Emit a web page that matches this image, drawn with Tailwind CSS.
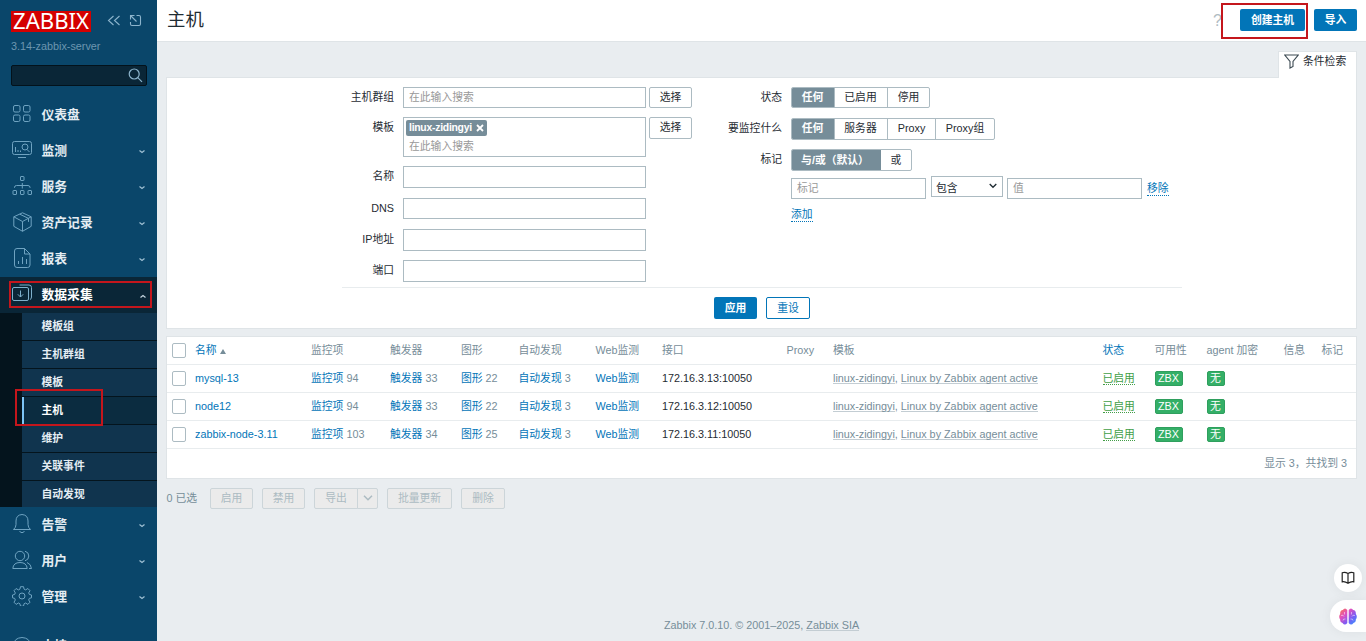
<!DOCTYPE html>
<html lang="zh-CN">

<head>
    <meta charset="UTF-8">
    <meta name="viewport" content="width=device-width, initial-scale=1.0">
    <title>主机</title>
    <script src="https://cdn.jsdelivr.net/npm/@tailwindcss/browser@4"></script>
</head>

<body class="relative flex h-[641px] overflow-hidden bg-[#e9edf0] font-['Liberation_Sans','Noto_Sans_CJK_SC',sans-serif] text-[10.8px] leading-[14px] text-[#1f2c33]">
    <!-- Sidebar -->
    <aside class="flex h-[641px] w-[157px] shrink-0 flex-col overflow-hidden bg-[#0a466a]">
        <div class="flex h-[43px] shrink-0 items-start pt-[11px] pl-[11px]">
            <svg width="80" height="21" viewBox="0 0 80 21" class="bg-[#d40000]">
                <text x="2" y="18" font-family="Noto Sans" font-size="21" fill="#fff" textLength="76" lengthAdjust="spacingAndGlyphs">ZABBIX</text>
            </svg>
            <svg class="mt-1 ml-4" width="14" height="12" viewBox="0 0 14 12" fill="none" stroke="#8cb4cc" stroke-width="1.1">
                <path d="M6.5 1 1.5 5.5l5 4.5M12.5 1l-5 4.5 5 4.5" />
            </svg>
            <svg class="mt-[3px] ml-2" width="13" height="13" viewBox="0 0 13 13" fill="none" stroke="#8cb4cc" stroke-width="1.1">
                <path d="M7.500 1.500h2.500q1.500 0 1.500 1.500v7q0 1.500-1.500 1.500H3q-1.500 0-1.500-1.500V8M1.500 5.500v-4h4M1.500 1.500l6 6" />
            </svg>
        </div>
        <div class="h-[22px] shrink-0 pl-[11px] leading-[7px] text-[#6d96b0]">3.14-zabbix-server</div>
        <div class="ml-[11px] flex h-[21px] w-[136px] shrink-0 items-center justify-end rounded-xs border border-[#03121b] bg-[#0a2637] pr-[3px]">
            <svg width="15" height="15" viewBox="0 0 15 15" fill="none" stroke="#8cb4cc" stroke-width="1.2">
                <circle cx="6.200" cy="6" r="5" />
                <path d="m9.800 9.600 4.200 4.200" />
            </svg>
        </div>

        <nav class="mt-[11px] shrink-0 text-[12.8px] font-bold text-[#e4edf3]">
            <a class="flex h-9 items-center pb-[2px] pl-3">
                <svg width="20" height="20" viewBox="0 0 20 20" fill="none" stroke="#6fa3c1">
                    <rect x="1.500" y="1.500" width="6.500" height="6.500" rx="1.500" />
                    <rect x="11.500" y="1.500" width="6.500" height="6.500" rx="1.500" />
                    <rect x="1.500" y="11" width="6.500" height="6.500" rx="1.500" />
                    <rect x="11.500" y="11" width="6.500" height="6.500" rx="1.500" />
                </svg>
                <span class="mt-px ml-[9.5px]">仪表盘</span>
            </a>
            <a class="flex h-9 items-center pr-[11px] pb-[2px] pl-3">
                <svg width="20" height="20" viewBox="0 0 20 20" fill="none" stroke="#6fa3c1">
                    <rect x=".5" y="1.500" width="19" height="13" rx="2" />
                    <path d="M6 17.500h8M3.500 7v5M6 10v2M8.500 10.500V12M15 9.500l2.500 2.500" />
                    <circle cx="13" cy="7" r="3" />
                </svg>
                <span class="mt-px ml-[9.5px]">监测</span>
                <svg class="mt-[3px] ml-auto" width="8" height="6" viewBox="0 0 8 6" fill="none" stroke="#9fc0d3" stroke-width="1.2"><path d="m1.500 1.500 2.500 2 2.500-2" /></svg>
            </a>
            <a class="flex h-9 items-center pr-[11px] pb-[2px] pl-3">
                <svg width="20" height="20" viewBox="0 0 20 20" fill="none" stroke="#6fa3c1">
                    <rect x="8.500" y=".5" width="3.500" height="4" rx=".5" />
                    <rect x="1" y="14.500" width="3.500" height="4" rx=".5" />
                    <rect x="8.500" y="14.500" width="3.500" height="4" rx=".5" />
                    <rect x="16" y="14.500" width="3.500" height="4" rx=".5" />
                    <path d="M10.300 7v5.500M2.500 12v-.5q0-2 2-2H16q2 0 2 2v.5" />
                </svg>
                <span class="mt-px ml-[9.5px]">服务</span>
                <svg class="mt-[3px] ml-auto" width="8" height="6" viewBox="0 0 8 6" fill="none" stroke="#9fc0d3" stroke-width="1.2"><path d="m1.500 1.500 2.500 2 2.500-2" /></svg>
            </a>
            <a class="flex h-9 items-center pr-[11px] pb-[2px] pl-3">
                <svg width="20" height="20" viewBox="0 0 20 20" fill="none" stroke="#6fa3c1">
                    <path d="m10.500.8 8.700 4v9.500l-8.700 5-8.700-5V4.800zM1.800 4.800l8.700 4.700 8.700-4.700M10.500 9.500v9.800M7.800 2.200l8.700 4.200v3.500" />
                </svg>
                <span class="mt-px ml-[9.5px]">资产记录</span>
                <svg class="mt-[3px] ml-auto" width="8" height="6" viewBox="0 0 8 6" fill="none" stroke="#9fc0d3" stroke-width="1.2"><path d="m1.500 1.500 2.500 2 2.500-2" /></svg>
            </a>
            <a class="flex h-9 items-center pr-[11px] pb-[2px] pl-3">
                <svg width="20" height="20" viewBox="0 0 20 20" fill="none" stroke="#6fa3c1">
                    <path d="M5 .5h7.500l5.500 5.500v11q0 2.500-2.500 2.500H5q-2.500 0-2.500-2.500V3Q2.500.5 5 .5M12.500.5V6H18M6.500 16v-3M10.500 16V9M14.500 16v-5" />
                </svg>
                <span class="mt-px ml-[9.5px]">报表</span>
                <svg class="mt-[3px] ml-auto" width="8" height="6" viewBox="0 0 8 6" fill="none" stroke="#9fc0d3" stroke-width="1.2"><path d="m1.500 1.500 2.500 2 2.500-2" /></svg>
            </a>
            <a class="flex h-9 items-center bg-[#0a2637] pr-[10px] pb-[2px] pl-3 text-white">
                <svg width="21" height="20" viewBox="0 0 21 20" fill="none" stroke="#7fb0cc">
                    <rect x=".5" y="3.500" width="16" height="13" rx="1.500" />
                    <path d="M7.500 1H17q2.500 0 2.500 2.500V13q0 2-1.500 2.500M8.500 6.500V13M5.800 10.300l2.700 2.700 2.700-2.700" />
                </svg>
                <span class="mt-px ml-[8.5px]">数据采集</span>
                <svg class="mt-[3px] ml-auto" width="8" height="6" viewBox="0 0 8 6" fill="none" stroke="#c5d6e0" stroke-width="1.200"><path d="m1.500 4.500 2.500-2 2.500 2" /></svg>
            </a>

            <!-- Submenu -->
            <ul class="h-[194px] overflow-hidden border-l-[22px] border-[#04141d] bg-[#10344e] text-[10.8px] [&>li]:h-7 [&>li]:border-b [&>li]:border-[#04141d] [&>li]:pt-[6px] [&>li]:pl-[19.5px]">
                <li>模板组</li>
                <li>主机群组</li>
                <li>模板</li>
                <li class="bg-[#0b2c40] text-white shadow-[inset_2px_0_0_#7cc4f5]">主机</li>
                <li>维护</li>
                <li>关联事件</li>
                <li>自动发现</li>
            </ul>

            <a class="flex h-9 items-center pr-[11px] pb-[2px] pl-3">
                <svg width="20" height="20" viewBox="0 0 20 20" fill="none" stroke="#6fa3c1">
                    <path d="M1.500 15.500h17q-2.500-2-2.500-5V7q0-6-6-6.500Q4 1 4 7v3.500q0 3-2.500 5zM7.500 17.500q2.500 2.500 5 0" />
                </svg>
                <span class="mt-px ml-[9.5px]">告警</span>
                <svg class="mt-[4px] ml-auto" width="8" height="6" viewBox="0 0 8 6" fill="none" stroke="#9fc0d3" stroke-width="1.200"><path d="m1.500 1.500 2.500 2 2.500-2" /></svg>
            </a>
            <a class="flex h-9 items-center pr-[11px] pb-[2px] pl-3">
                <svg width="20" height="20" viewBox="0 0 20 20" fill="none" stroke="#6fa3c1">
                    <circle cx="8" cy="6" r="4.700" />
                    <path d="M.8 18.500q.5-6 7.200-6t7.200 6zM13 1.200q3.800 1 3.800 4.800T13 10.800M15 12.500q4 1.500 4.500 6H17" />
                </svg>
                <span class="mt-px ml-[9.5px]">用户</span>
                <svg class="mt-[4px] ml-auto" width="8" height="6" viewBox="0 0 8 6" fill="none" stroke="#9fc0d3" stroke-width="1.200"><path d="m1.500 1.500 2.500 2 2.500-2" /></svg>
            </a>
            <a class="flex h-9 items-center pr-[11px] pb-[2px] pl-3">
                <svg width="20" height="20" viewBox="0 0 20 20" fill="none" stroke="#6fa3c1">
                    <circle cx="10" cy="10" r="3" />
                    <path d="M8.500.7h3l.6 2.500 1.500.7 2.300-1.400 2.100 2.200-1.300 2.200.6 1.500 2.200.6v2.800l-2.200.6-.6 1.600 1.300 2.200-2.100 2.200-2.300-1.400-1.500.7-.6 2.500h-3l-.6-2.500-1.500-.7-2.300 1.400L2 16.200 3.300 14l-.6-1.600-2.200-.6V9l2.200-.6.6-1.500L2 4.700l2.100-2.200 2.300 1.400 1.500-.7z" />
                </svg>
                <span class="mt-px ml-[9.5px]">管理</span>
                <svg class="mt-[4px] ml-auto" width="8" height="6" viewBox="0 0 8 6" fill="none" stroke="#9fc0d3" stroke-width="1.200"><path d="m1.500 1.500 2.500 2 2.500-2" /></svg>
            </a>
            <a class="mt-[13px] flex h-9 items-center pl-3">
                <svg width="20" height="20" viewBox="0 0 20 20" fill="none" stroke="#6fa3c1">
                    <path d="M1.500 12V9q.5-7 8.500-7.500Q18 2 18.500 9v3" />
                </svg>
                <span class="ml-[9.5px]">支持</span>
            </a>
        </nav>
    </aside>

    <!-- Content -->
    <div class="flex grow flex-col">
        <header class="flex h-[42px] shrink-0 items-start border-b border-[#dfe4e7] bg-white pt-[9px] pr-[9px] pl-[10px]">
            <h1 class="text-[18.4px] leading-[22px]">主机</h1>
            <span class="mt-[2px] ml-auto text-base leading-5 text-[#b0bcc3]">?</span>
            <button class="ml-[18px] h-[22px] w-[65px] rounded-xs bg-[#0275b8] pb-px font-bold text-white">创建主机</button>
            <button class="ml-[9px] h-[22px] w-[43px] rounded-xs bg-[#0275b8] pb-px font-bold text-white">导入</button>
        </header>

        <main class="flex grow flex-col px-[9px]">
            <div class="z-10 mt-[9px] mb-[-1px] flex h-[27px] w-[79px] shrink-0 items-start self-end border border-b-0 border-[#dfe4e7] bg-white pt-[2px] pl-[5px]">
                <svg width="15" height="15" viewBox="0 0 15 15" fill="none" stroke="#3c4a52" stroke-width="1.100">
                    <path d="M.8 1h13.400L9 7.500v5l-3 1.500V7.500z" />
                </svg>
                <span class="ml-1">条件检索</span>
            </div>

            <!-- Filter -->
            <form class="h-[252px] shrink-0 border border-[#dfe4e7] bg-white pl-[175px]">
                <div class="flex h-[210px] w-[840px] border-b border-[#e8ecee] pt-[9px]">
                    <div class="w-[374px]">
                        <div class="flex h-[30px] items-start">
                            <label class="mt-[3px] mr-[9px] w-[52px] text-right">主机群组</label>
                            <div class="h-[21px] w-[243px] border border-[#acbbc2] pt-[2px] pl-[5px] text-[#999]">在此输入搜索</div>
                            <button type="button" class="ml-[3px] h-[21px] w-[43px] rounded-xs border border-[#acbbc2] pb-px">选择</button>
                        </div>
                        <div class="flex h-[49px] items-start">
                            <label class="mt-[3px] mr-[9px] w-[52px] text-right">模板</label>
                            <div class="h-10 w-[243px] border border-[#acbbc2] pt-[2px] pl-[2px]">
                                <span class="flex h-4 w-[81px] items-center justify-between rounded-xs bg-[#768d99] px-[3px] text-[10.4px] font-bold tracking-[-.25px] text-white">linux-zidingyi
                                    <svg width="8" height="8" viewBox="0 0 8 8" stroke="#fff" stroke-width="1.800"><path d="m1 1 6 6M7 1 1 7" /></svg>
                                </span>
                                <div class="mt-[3px] pl-[3px] text-[#999]">在此输入搜索</div>
                            </div>
                            <button type="button" class="ml-[3px] h-[22px] w-[43px] rounded-xs border border-[#acbbc2] pb-[2px]">选择</button>
                        </div>
                        <div class="flex h-8 items-start">
                            <label class="mt-[3px] mr-[9px] w-[52px] text-right">名称</label>
                            <input type="text" class="h-[22px] w-[243px] border border-[#acbbc2]">
                        </div>
                        <div class="flex h-[31px] items-start">
                            <label class="mt-[3px] mr-[9px] w-[52px] text-right">DNS</label>
                            <input type="text" class="h-[21px] w-[243px] border border-[#acbbc2]">
                        </div>
                        <div class="flex h-[31px] items-start">
                            <label class="mt-[3px] mr-[9px] w-[52px] text-right">IP地址</label>
                            <input type="text" class="h-[22px] w-[243px] border border-[#acbbc2]">
                        </div>
                        <div class="flex items-start">
                            <label class="mt-[3px] mr-[9px] w-[52px] text-right">端口</label>
                            <input type="text" class="h-[22px] w-[243px] border border-[#acbbc2]">
                        </div>
                    </div>

                    <div class="w-[466px]">
                        <div class="flex h-[31px] items-start">
                            <label class="mt-[3px] mr-[9px] w-[66px] text-right">状态</label>
                            <div class="flex h-[21px] divide-x divide-[#acbbc2] overflow-hidden rounded-xs border border-[#acbbc2] text-center leading-[19px]">
                                <span class="-m-px h-[21px] w-[44px] bg-[#768d99] pt-px font-bold text-white">任何</span>
                                <span class="w-[54px]">已启用</span>
                                <span class="w-[41px]">停用</span>
                            </div>
                        </div>
                        <div class="flex h-[31px] items-start">
                            <label class="mt-[3px] mr-[9px] w-[66px] text-right">要监控什么</label>
                            <div class="flex h-[22px] divide-x divide-[#acbbc2] overflow-hidden rounded-xs border border-[#acbbc2] text-center leading-[19px]">
                                <span class="-m-px h-[22px] w-[44px] bg-[#768d99] pt-px font-bold text-white">任何</span>
                                <span class="w-[54px]">服务器</span>
                                <span class="w-[48px]">Proxy</span>
                                <span class="w-[58px]">Proxy组</span>
                            </div>
                        </div>
                        <div class="flex h-[29px] items-start">
                            <label class="mt-[3px] mr-[9px] w-[66px] text-right">标记</label>
                            <div class="flex h-[22px] overflow-hidden rounded-xs border border-[#acbbc2] text-center leading-[20px]">
                                <span class="-m-px h-[22px] w-[90px] bg-[#768d99] pt-px pr-[2px] font-bold text-white">与/或（默认）</span>
                                <span class="w-[31px] pl-px">或</span>
                            </div>
                        </div>
                        <div class="ml-[75px] flex items-start">
                            <div class="h-[21px] w-[135px] border border-[#acbbc2] pt-[2px] pl-[5px] text-[#999]">标记</div>
                            <div class="mt-[-2px] ml-[5px] flex h-[21px] w-[72px] items-center justify-between border border-[#acbbc2] pt-[2px] pr-[5px] pl-1">包含
                                <svg class="mb-[3px]" width="8" height="6" viewBox="0 0 8 6" fill="none" stroke="#1f2c33" stroke-width="1.300"><path d="m.7 1 3.300 3.300L7.300 1" /></svg>
                            </div>
                            <div class="ml-1 h-[21px] w-[135px] border border-[#acbbc2] pt-[2px] pl-[5px] text-[#999]">值</div>
                            <a class="mt-[3px] ml-[5px] h-[15px] border-b border-dotted border-[#0275b8] text-[#0275b8]">移除</a>
                        </div>
                        <a class="mt-[8px] ml-[75px] inline-block h-[15px] border-b border-dotted border-[#0275b8] text-[#0275b8]">添加</a>
                    </div>
                </div>
                <div class="flex w-[840px] justify-center gap-[9px] pt-[9px]">
                    <button type="button" class="h-[22px] w-[43px] rounded-xs bg-[#0275b8] pb-px font-bold text-white">应用</button>
                    <button type="button" class="h-[22px] w-[44px] rounded-xs border border-[#0275b8] pb-px text-[#0275b8]">重设</button>
                </div>
            </form>

            <!-- Hosts -->
            <div class="mt-[7px] h-[143px] shrink-0 border border-[#dfe4e7] bg-white">
                <table class="w-full table-fixed border-collapse text-left text-[#768d99] [&_td]:p-0 [&_th]:p-0 [&_th]:font-normal [&_tr]:border-b [&_tr]:border-[#e8ecee]">
                    <colgroup>
                        <col class="w-[28px]"><col class="w-[116px]"><col class="w-[79px]"><col class="w-[71px]"><col class="w-[57.5px]">
                        <col class="w-[77px]"><col class="w-[66.5px]"><col class="w-[124.5px]"><col class="w-[46.5px]"><col class="w-[269.5px]">
                        <col class="w-[52px]"><col class="w-[52px]"><col class="w-[77px]"><col class="w-[38px]"><col>
                    </colgroup>
                    <thead>
                        <tr class="h-[27px]">
                            <th><span class="ml-[5px] block h-[15px] w-[14px] rounded-xs border border-[#acbbc2]"></span></th>
                            <th class="text-[#0275b8]">名称<span class="ml-[3px] inline-block border-x-[3px] border-b-[5px] border-x-transparent border-b-[#768d99]"></span></th>
                            <th>监控项</th>
                            <th>触发器</th>
                            <th>图形</th>
                            <th>自动发现</th>
                            <th>Web监测</th>
                            <th>接口</th>
                            <th>Proxy</th>
                            <th>模板</th>
                            <th class="text-[#0275b8]">状态</th>
                            <th>可用性</th>
                            <th>agent 加密</th>
                            <th>信息</th>
                            <th>标记</th>
                        </tr>
                    </thead>
                    <tbody class="[&>tr]:h-7">
                        <tr>
                            <td><span class="ml-[5px] block h-[15px] w-[14px] rounded-xs border border-[#acbbc2]"></span></td>
                            <td class="text-[#0275b8]">mysql-13</td>
                            <td><a class="text-[#0275b8]">监控项</a> 94</td>
                            <td><a class="text-[#0275b8]">触发器</a> 33</td>
                            <td><a class="text-[#0275b8]">图形</a> 22</td>
                            <td><a class="text-[#0275b8]">自动发现</a> 3</td>
                            <td class="text-[#0275b8]">Web监测</td>
                            <td class="text-[#1f2c33]">172.16.3.13:10050</td>
                            <td></td>
                            <td><a class="inline-block h-[13px] border-b border-[#c3cdd3]">linux-zidingyi</a>, <a class="inline-block h-[13px] border-b border-[#c3cdd3]">Linux by Zabbix agent active</a></td>
                            <td><a class="inline-block h-[14px] border-b border-dotted border-[#429e47] text-[#429e47]">已启用</a></td>
                            <td><span class="block h-[15px] w-[28px] rounded-xs border border-[#2f9f5e] bg-[#34af67] text-center leading-[13px] text-white">ZBX</span></td>
                            <td><span class="block h-[15px] w-[18px] rounded-xs border border-[#2f9f5e] bg-[#34af67] text-center leading-[13px] text-white">无</span></td>
                            <td></td>
                            <td></td>
                        </tr>
                        <tr>
                            <td><span class="ml-[5px] block h-[15px] w-[14px] rounded-xs border border-[#acbbc2]"></span></td>
                            <td class="text-[#0275b8]">node12</td>
                            <td><a class="text-[#0275b8]">监控项</a> 94</td>
                            <td><a class="text-[#0275b8]">触发器</a> 33</td>
                            <td><a class="text-[#0275b8]">图形</a> 22</td>
                            <td><a class="text-[#0275b8]">自动发现</a> 3</td>
                            <td class="text-[#0275b8]">Web监测</td>
                            <td class="text-[#1f2c33]">172.16.3.12:10050</td>
                            <td></td>
                            <td><a class="inline-block h-[13px] border-b border-[#c3cdd3]">linux-zidingyi</a>, <a class="inline-block h-[13px] border-b border-[#c3cdd3]">Linux by Zabbix agent active</a></td>
                            <td><a class="inline-block h-[14px] border-b border-dotted border-[#429e47] text-[#429e47]">已启用</a></td>
                            <td><span class="block h-[15px] w-[28px] rounded-xs border border-[#2f9f5e] bg-[#34af67] text-center leading-[13px] text-white">ZBX</span></td>
                            <td><span class="block h-[15px] w-[18px] rounded-xs border border-[#2f9f5e] bg-[#34af67] text-center leading-[13px] text-white">无</span></td>
                            <td></td>
                            <td></td>
                        </tr>
                        <tr>
                            <td><span class="ml-[5px] block h-[15px] w-[14px] rounded-xs border border-[#acbbc2]"></span></td>
                            <td class="text-[#0275b8]">zabbix-node-3.11</td>
                            <td><a class="text-[#0275b8]">监控项</a> 103</td>
                            <td><a class="text-[#0275b8]">触发器</a> 34</td>
                            <td><a class="text-[#0275b8]">图形</a> 25</td>
                            <td><a class="text-[#0275b8]">自动发现</a> 3</td>
                            <td class="text-[#0275b8]">Web监测</td>
                            <td class="text-[#1f2c33]">172.16.3.11:10050</td>
                            <td></td>
                            <td><a class="inline-block h-[13px] border-b border-[#c3cdd3]">linux-zidingyi</a>, <a class="inline-block h-[13px] border-b border-[#c3cdd3]">Linux by Zabbix agent active</a></td>
                            <td><a class="inline-block h-[14px] border-b border-dotted border-[#429e47] text-[#429e47]">已启用</a></td>
                            <td><span class="block h-[15px] w-[28px] rounded-xs border border-[#2f9f5e] bg-[#34af67] text-center leading-[13px] text-white">ZBX</span></td>
                            <td><span class="block h-[15px] w-[18px] rounded-xs border border-[#2f9f5e] bg-[#34af67] text-center leading-[13px] text-white">无</span></td>
                            <td></td>
                            <td></td>
                        </tr>
                    </tbody>
                </table>
                <div class="pt-[7px] pr-[9px] text-right text-[#768d99]">显示 3，共找到 3</div>
            </div>

            <!-- Mass actions -->
            <div class="mt-[9px] flex h-[21px] items-center text-[#acbbc2]">
                <span class="mb-px w-[44px] pl-[.5px] text-[#768d99]">0 已选</span>
                <button class="h-[21px] w-[43px] rounded-xs border border-[#ccd5d9] bg-[#ebebeb] pb-px">启用</button>
                <button class="ml-[9px] h-[21px] w-[43px] rounded-xs border border-[#ccd5d9] bg-[#ebebeb] pb-px">禁用</button>
                <button class="ml-[9px] h-[21px] w-[44px] rounded-l-xs border border-[#ccd5d9] bg-[#ebebeb] pb-px">导出</button>
                <button class="ml-[-1px] flex h-[21px] w-[21px] items-center justify-center rounded-r-xs border border-[#ccd5d9] bg-[#ebebeb] pb-px">
                    <svg width="10" height="6" viewBox="0 0 10 6" fill="none" stroke="#acbbc2" stroke-width="1.500"><path d="m1 .8 4 4 4-4" /></svg>
                </button>
                <button class="ml-[9px] h-[21px] w-[65px] rounded-xs border border-[#ccd5d9] bg-[#ebebeb] pb-px">批量更新</button>
                <button class="ml-[9px] h-[21px] w-[44px] rounded-xs border border-[#ccd5d9] bg-[#ebebeb] pb-px">删除</button>
            </div>

            <footer class="mt-auto mb-[9px] text-center text-[#768d99]">Zabbix 7.0.10. © 2001–2025, <a class="inline-block h-[13px] border-b border-[#c3cdd3]">Zabbix SIA</a></footer>
        </main>
    </div>

    <!-- Red highlight frames -->
    <div class="absolute top-[281px] left-[9px] h-[27px] w-[143px] border-2 border-[#c4161c]"></div>
    <div class="absolute top-[389px] left-[15px] h-[37px] w-[88px] border-2 border-[#c4161c]"></div>
    <div class="absolute top-[3px] left-[1221px] h-[36px] w-[87px] border-2 border-[#c4161c]"></div>

    <!-- Floating buttons -->
    <div class="absolute top-[564px] left-[1334px] flex size-7 items-center justify-center rounded-full bg-white shadow-[0_0_12px_rgba(0,0,0,.06)]">
        <svg width="14" height="14" viewBox="0 0 14 14" fill="none" stroke="#222" stroke-width="1.200">
            <path d="M7 2.500Q4 .8 1.200 1.800v9Q4 10.300 7 12.300q3-2 5.800-1.500v-9Q10 .8 7 2.500zv9.800" />
        </svg>
    </div>
    <div class="absolute top-[600px] left-[1330px] flex h-8 w-[36px] items-center rounded-l-full bg-white pl-[9px] shadow-[0_0_12px_rgba(0,0,0,.06)]">
        <svg width="18" height="17" viewBox="0 0 18 17">
            <defs>
                <linearGradient id="brain" x1="0" y1="0" x2="1" y2="1">
                    <stop offset="0" stop-color="#ff7a45" />
                    <stop offset=".35" stop-color="#e04fc0" />
                    <stop offset=".65" stop-color="#7a5cf5" />
                    <stop offset="1" stop-color="#2f9bff" />
                </linearGradient>
            </defs>
            <path fill="url(#brain)" d="M8.300 2v13q-2.500 3-4.800 0Q.8 14.500 1.200 11.500-.8 8.500 1.200 6 .8 2.500 3.800 2q2.200-3 4.500 0zM9.700 2v13q2.500 3 4.800 0 2.700-.5 2.300-3.500 2-3 0-5.500.4-3.500-2.600-4-2.200-3-4.500 0z" />
            <path fill="none" stroke="#fff" stroke-opacity=".7" stroke-width=".7" d="M2 7.500q2.500-1 3 1M5.500 4v2.500M4 12.500q0-2 2.500-1.500M16 7.500q-2.500-1-3 1M12.500 4v2.500M14 12.500q0-2-2.500-1.500" />
        </svg>
    </div>
</body>

</html>
